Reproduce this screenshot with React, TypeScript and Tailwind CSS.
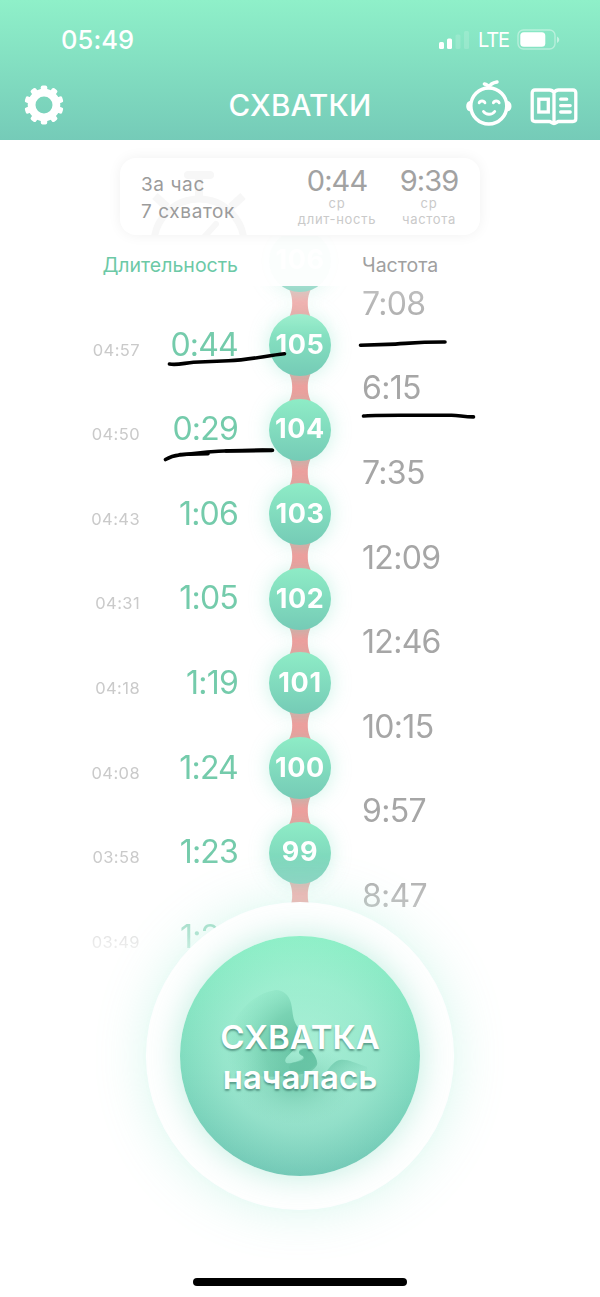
import React from "react";

type Contraction = { id: number; time: string; duration: string };

const contractions: Contraction[] = [
  { id: 106, time: "", duration: "" },
  { id: 105, time: "04:57", duration: "0:44" },
  { id: 104, time: "04:50", duration: "0:29" },
  { id: 103, time: "04:43", duration: "1:06" },
  { id: 102, time: "04:31", duration: "1:05" },
  { id: 101, time: "04:18", duration: "1:19" },
  { id: 100, time: "04:08", duration: "1:24" },
  { id: 99, time: "03:58", duration: "1:23" },
  { id: 98, time: "03:49", duration: "1:25" },
];

const intervals = ["7:08", "6:15", "7:35", "12:09", "12:46", "10:15", "9:57", "8:47"];

const teeth = [0, 36, 72, 108, 144, 180, 216, 252, 288, 324];

function GearIcon() {
  return (
    <svg width="40" height="40" viewBox="-20 -20 40 40">
      <circle r="12.4" fill="none" stroke="#fff" strokeWidth="7.8" />
      {teeth.map((a) => (
        <rect key={a} x="-3.2" y="-19.6" width="6.4" height="7" rx="1.8" fill="#fff" transform={`rotate(${a})`} />
      ))}
    </svg>
  );
}

function BabyIcon() {
  return (
    <svg width="46" height="48" viewBox="0 0 46 48" fill="none" stroke="#fff" strokeLinecap="round" strokeLinejoin="round">
      <circle cx="22.8" cy="27" r="18" strokeWidth="3.5" />
      <path d="M4.6 22.5C2.4 23 1 25 1 27.2s1.500 4.200 3.800 4.600zM41 22.500c2.200.500 3.700 2.500 3.700 4.700s-1.500 4.200-3.800 4.600z" fill="#fff" strokeWidth="1.6" />
      <path d="M23 8.500c-1-2.200-2.600-3.300-4.600-3.600M23 8.500c1-3.300 3.800-4.800 8-5.500" strokeWidth="3.500" />
      <path d="M13.200 23.800c.9-2.500 4.700-2.500 5.700 0M27.400 23.800c.9-2.500 4.700-2.500 5.700 0" strokeWidth="2.900" />
      <path d="M17.500 32.500c2.500 3.700 8.500 3.700 11.200 0" strokeWidth="2.900" />
    </svg>
  );
}

function BookIcon() {
  return (
    <svg width="48" height="38" viewBox="0 0 48 38" fill="none" stroke="#fff" strokeLinejoin="round" strokeLinecap="round">
      <path
        d="M24 4.500C22.800 2.800 21.500 2 19.500 2H5C3.300 2 2.200 3.100 2.200 4.800v26c0 1.700 1.100 2.700 2.800 2.700h14.500c1.500 0 2.300 2 4.500 2s3-2 4.500-2H43c1.700 0 2.800-1 2.800-2.700v-26C45.800 3.100 44.700 2 43 2H28.500C26.500 2 25.200 2.800 24 4.500zM24 4.500v30"
        strokeWidth="3.300"
      />
      <rect x="8.800" y="11.200" width="9.500" height="12.800" strokeWidth="3.300" strokeLinejoin="miter" />
      <path d="M30.700 11.200h6M30.700 17.600h9.500M30.700 24h9.500" strokeWidth="3.300" />
    </svg>
  );
}

function SignalIcon() {
  return (
    <svg width="31" height="20" viewBox="0 0 31 20" fill="#fff">
      <rect x="0" y="12" width="5" height="7" rx="1.500" />
      <rect x="8" y="8.500" width="5" height="10.500" rx="1.500" />
      <rect x="16.500" y="4.500" width="5" height="14.500" rx="1.500" opacity=".15" />
      <rect x="25" y="1" width="5" height="18" rx="1.500" opacity=".15" />
    </svg>
  );
}

function BatteryIcon() {
  return (
    <svg width="43" height="22" viewBox="0 0 43 22">
      <rect x="1" y="1" width="37" height="19" rx="5.500" fill="none" stroke="#fff" strokeOpacity=".4" strokeWidth="1.400" />
      <rect x="3.300" y="3.200" width="25" height="14.600" rx="3.500" fill="#fff" />
      <path d="M40 7.500v6.500c1.500-.8 2.200-1.800 2.200-3.200S41.500 8.300 40 7.500z" fill="#fff" fillOpacity=".5" />
    </svg>
  );
}

function Stopwatch() {
  return (
    <svg className="absolute left-[26px] top-[10px]" width="110" height="67" viewBox="0 0 110 67" fill="none" stroke="#f7f7f7">
      <circle cx="53" cy="76" r="45" strokeWidth="7" />
      <path d="M42 7h22" strokeWidth="8" strokeLinecap="round" />
      <path d="M53 10v20" strokeWidth="8" />
      <path d="M9 28l12 11M97 28L85 39" strokeWidth="8" />
      <path d="M50 78l20-22" strokeWidth="6" strokeLinecap="round" />
    </svg>
  );
}

function Embryo() {
  return (
    <svg className="absolute inset-0" width="240" height="240" viewBox="180 936 240 240">
      <defs>
        <radialGradient id="figure" gradientUnits="userSpaceOnUse" cx="303" cy="1048" r="76">
          <stop offset="0" stopColor="#58b998" stopOpacity=".9" />
          <stop offset=".5" stopColor="#5fc19f" stopOpacity=".6" />
          <stop offset=".75" stopColor="#68caa8" stopOpacity=".3" />
          <stop offset="1" stopColor="#6fd0ae" stopOpacity="0" />
        </radialGradient>
        <linearGradient id="leg" gradientUnits="userSpaceOnUse" x1="336" y1="1060" x2="350" y2="1086">
          <stop offset="0" stopColor="#5dbd9e" stopOpacity=".6" />
          <stop offset="1" stopColor="#7fd2b8" stopOpacity="0" />
        </linearGradient>
        <radialGradient id="belly">
          <stop offset="0" stopColor="#57b797" stopOpacity=".6" />
          <stop offset="1" stopColor="#7fd2b8" stopOpacity="0" />
        </radialGradient>
      </defs>
      <path
        d="M276 990c7 0 13 5 15 13 2 8 1 16 6 23 5 7 4 10 2 15-2 7-9 12-13 17-2 4 0 6 5 5 6-1 12-2 13-5 0-3-5-2-5-6 2-4 10-4 14 1 3 4 5 9 4 12-3 6-10 8-15 9-25 4-50 5-80-6 0-40 24-74 54-78z"
        fill="url(#figure)"
      />
      <path d="M299 1051c2-4 9-4 13 1 3 4 5 9 4 12-4 6-12 9-24 8-5-4-3-8 3-10 6-2 8-3 8-5 0-3-4-3-4-6z" fill="#60c09f" opacity=".5" />
      <ellipse cx="295" cy="1084" rx="60" ry="40" fill="url(#belly)" />
      <path d="M326 1072c5-6 8-11 14-12 8-1 14 3 27 7 3 10-12 27-30 31-8-5-12-15-11-26z" fill="url(#leg)" />
    </svg>
  );
}

function Connector() {
  return (
    <svg className="-my-[5px] h-[32.6px] w-[30px] shrink-0" viewBox="0 0 30 32.6">
      <defs>
        <linearGradient id="link" x1="0" y1="0" x2="0" y2="1">
          <stop offset=".14" stopColor="#e0a8a4" />
          <stop offset=".45" stopColor="#f59c9c" />
          <stop offset="1" stopColor="#f29c9b" />
        </linearGradient>
      </defs>
      <path d="M3 0C6.500 7 7.200 11 7.200 16.300S6.500 25.600 3 32.600h24C23.500 25.600 22.800 21.600 22.800 16.300S23.500 7 27 0z" fill="url(#link)" />
    </svg>
  );
}

function StatusBar() {
  return (
    <div className="flex h-[70px] items-center justify-between pt-[10px] pr-[40px] pl-[61px]">
      <span className="text-[25.5px] font-medium tracking-[0.1px]">05:49</span>
      <div className="flex items-center">
        <SignalIcon />
        <span className="ml-[8px] w-[32px] text-[20px] tracking-[-1.1px]">LTE</span>
        <span className="ml-[7px]">
          <BatteryIcon />
        </span>
      </div>
    </div>
  );
}

function Average({ value, label }: { value: string; label: string }) {
  return (
    <div className="w-[80px] pt-[7px] text-center whitespace-nowrap">
      <p className="h-[31px] text-[29px] leading-[32px] tracking-[-0.9px] text-[#a2a2a2]">{value}</p>
      <p className="text-[13px] leading-[15px] tracking-[0.7px] text-[#cacaca]">ср</p>
      <p className="text-[13px] leading-[17px] tracking-[0.7px] text-[#cacaca]">{label}</p>
    </div>
  );
}

function Summary() {
  return (
    <section className="relative mx-auto mt-[18px] flex h-[77px] w-[360px] shrink-0 rounded-[16px] bg-white shadow-[0_0_14px_rgba(0,0,0,0.06)]">
      <Stopwatch />
      <div className="relative w-[177px] pt-[13px] pl-[21px] text-[19px] leading-[27px] tracking-[0.6px] whitespace-nowrap text-[#9b9b9b]">
        <p>За час</p>
        <p>7 схваток</p>
      </div>
      <Average value="0:44" label="длит-ность" />
      <div className="w-[12px]" />
      <Average value="9:39" label="частота" />
    </section>
  );
}

function Timeline() {
  return (
    <section className="-mt-[44px] flex h-[726px] shrink-0 overflow-hidden [mask-image:linear-gradient(to_bottom,rgba(0,0,0,0.03)_0px,rgba(0,0,0,0.03)_50px,rgba(0,0,0,0.7)_50px,#000_100px,#000_620px,rgba(0,0,0,0.75)_660px,rgba(0,0,0,0.5)_700px,rgba(0,0,0,0.3)_713px,transparent_720px)]">
      <div className="-mt-[18.2px] w-[238px] shrink-0">
        {contractions.map((c) => (
          <div key={c.id} className="flex h-[84.6px] items-center justify-end">
            <div className="flex items-baseline">
              <span className="text-[16.500px] tracking-[0.4px] text-[#cacaca]">{c.time}</span>
              <span className="w-[98px] text-right text-[32px] tracking-[-0.8px] text-[#74cbab]">{c.duration}</span>
            </div>
          </div>
        ))}
      </div>
      <div className="-mt-[6.500px] ml-[31px] flex w-[62px] shrink-0 flex-col items-center">
        {contractions.slice(0, -1).map((c) => (
          <React.Fragment key={c.id}>
            <div className="relative z-10 flex h-[62px] w-[62px] shrink-0 items-center justify-center rounded-full bg-linear-to-b from-[#8eecc6] to-[#75cbb6] text-[27px] font-bold tracking-[0.6px] text-white shadow-[0_0_20px_rgba(110,220,190,0.35)]">
              {c.id}
            </div>
            <Connector />
          </React.Fragment>
        ))}
      </div>
      <div className="mt-[25.500px] ml-[31px]">
        {intervals.map((v) => (
          <p key={v} className="flex h-[84.6px] items-center text-[32px] tracking-[-0.7px] text-[#a6a6a6]">
            {v}
          </p>
        ))}
      </div>
    </section>
  );
}

function PenMarks() {
  return (
    <svg className="pointer-events-none absolute top-[330px] left-[150px]" width="340" height="140" viewBox="150 330 340 140" fill="none" stroke="#000" strokeWidth="3.600" strokeLinecap="round" strokeLinejoin="round">
      <path d="M169.500 364c7 1.500 14-.8 24-1.800l35-1.500c22-.7 37-5 56-7" />
      <path d="M165.500 459.500c5-3 9-4 14-4.500l28-3c19-1.500 42-2 65-1.800" />
      <path d="M180 454.500l28-.8M226 451l46-.6" />
      <path d="M360.500 345.200l27-.8c20-.8 28-2.500 57.500-2.400" />
      <path d="M363.500 416c9-1.300 30-.7 88-.7 8 .1 12 1.600 22 1.600" />
    </svg>
  );
}

export default function App() {
  return (
    <div className="relative flex h-[1297px] w-[600px] flex-col overflow-hidden bg-white font-['Inter',sans-serif]">
      <header className="h-[140px] shrink-0 bg-linear-to-b from-[#8ff0c9] to-[#75cbb8] text-white">
        <StatusBar />
        <div className="grid h-[70px] grid-cols-3 items-center px-[22px]">
          <div className="pl-[2px]">
            <GearIcon />
          </div>
          <h1 className="text-center text-[29.5px] font-medium tracking-[0.2px]">СХВАТКИ</h1>
          <div className="flex items-center justify-end gap-[18px]">
            <span className="-mt-[4px]">
              <BabyIcon />
            </span>
            <span className="-mr-[0.5px] pt-[3px]">
              <BookIcon />
            </span>
          </div>
        </div>
      </header>

      <Summary />

      <div className="relative mt-[15px] flex h-[30px] shrink-0 items-center pt-[2px] text-[19.500px]">
        <span className="w-[238px] text-right text-[#6cc9a6]">Длительность</span>
        <span className="ml-[124px] text-[#a0a0a0]">Частота</span>
      </div>
      <Timeline />

      <div className="absolute top-[902px] left-[146px] flex h-[308px] w-[308px] items-center justify-center rounded-full bg-white shadow-[0_0_50px_rgba(130,230,200,0.3)]">
        <button className="relative h-[240px] w-[240px] rounded-full bg-[radial-gradient(circle,rgba(190,248,226,0.65)_0%,rgba(190,248,226,0.35)_45%,rgba(190,248,226,0)_70%),linear-gradient(to_bottom,#8ff0c8,#74c9b7)] text-white shadow-[0_0_34px_rgba(110,215,185,0.45)]">
          <Embryo />
          <span className="relative block pt-[2px] text-[33px] leading-[40px] font-semibold [text-shadow:0_2px_2px_rgba(50,110,95,0.6)]">
            СХВАТКА
            <br />
            началась
          </span>
        </button>
      </div>

      <PenMarks />
      <div className="absolute bottom-[11px] left-[193px] h-[8px] w-[214px] rounded-full bg-black" />
    </div>
  );
}
